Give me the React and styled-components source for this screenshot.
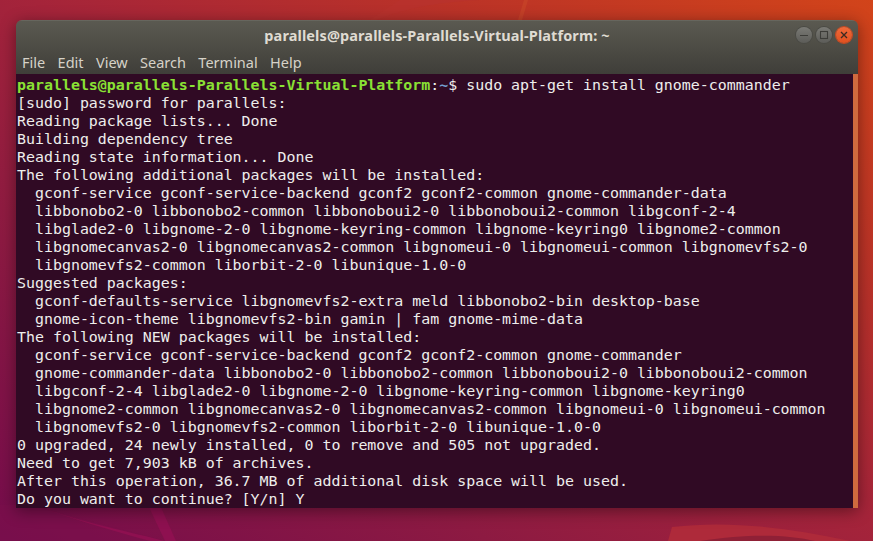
import React from 'react';
import styled, { createGlobalStyle } from 'styled-components';

const GlobalStyle = createGlobalStyle`
    html, body {
        margin: 0;
        padding: 0;
    }
`;

const Desktop = styled.div`
    position: relative;
    width: 873px;
    height: 541px;
    box-sizing: border-box;
    padding: 20px 15px 33px 16px;
    overflow: hidden;
    background: linear-gradient(to top right, #740c4c 0%, #8d1a42 28%, #a5243a 52%, #bb3327 76%, #d2441a 100%);
`;

const Wallpaper = styled.svg`
    position: absolute;
    inset: 0;
`;

const Window = styled.div`
    position: relative;
    display: flex;
    flex-direction: column;
    height: 100%;
    border-radius: 6px 6px 0 0;
    overflow: hidden;
    box-shadow: 0 3px 16px rgba(0, 0, 0, 0.42);
`;

const Header = styled.div`
    height: 54px;
    flex: none;
    background: linear-gradient(#5b5a51, #3f3e39);
    box-shadow: inset 0 1px 0 rgba(255, 255, 255, 0.08);
`;

const TitleBar = styled.div`
    position: relative;
    height: 30px;
    display: flex;
    align-items: center;
    justify-content: center;
`;

const Title = styled.div`
    font: 700 14.5px "Noto Sans", sans-serif;
    letter-spacing: 0.1px;
    color: #dfdbd2;
`;

const Controls = styled.div`
    position: absolute;
    top: 7px;
    right: 6px;
    display: flex;
    gap: 4px;
`;

const Control = styled.div`
    width: 16px;
    height: 16px;
    display: flex;
    align-items: center;
    justify-content: center;
    border-radius: 50%;
    background: ${props =>
        props.$close
            ? 'linear-gradient(#f0693a, #e0501f)'
            : 'linear-gradient(#7a7a75, #5c5c58)'};
    box-shadow: 0 0 0 1px ${props => (props.$close ? '#c9481f' : '#4a4a45')};
`;

const MenuBar = styled.div`
    height: 24px;
    display: flex;
    align-items: center;
    gap: 12.4px;
    padding-left: 6px;
`;

const MenuItem = styled.span`
    font: 14.5px "Noto Sans", sans-serif;
    color: #d6d2c8;
`;

const TerminalArea = styled.div`
    flex: 1;
    display: flex;
    min-height: 0;
    background: #300a24;
`;

const Output = styled.div`
    flex: 1;
    padding: 2px 0 0 1px;
    font-family: "DejaVu Sans Mono", monospace;
    font-size: 14.93px;
    line-height: 18px;
    color: #eeeeec;
`;

const Line = styled.div`
    height: 18px;
    white-space: pre;
`;

const PromptUser = styled.span`
    font-weight: 700;
    color: #8ae234;
`;

const PromptPath = styled.span`
    font-weight: 700;
    color: #729fcf;
`;

const Scrollbar = styled.div`
    width: 5px;
    flex: none;
    background: #cf6a3e;
`;

const LINES = [
    '[sudo] password for parallels:',
    'Reading package lists... Done',
    'Building dependency tree',
    'Reading state information... Done',
    'The following additional packages will be installed:',
    '  gconf-service gconf-service-backend gconf2 gconf2-common gnome-commander-data',
    '  libbonobo2-0 libbonobo2-common libbonoboui2-0 libbonoboui2-common libgconf-2-4',
    '  libglade2-0 libgnome-2-0 libgnome-keyring-common libgnome-keyring0 libgnome2-common',
    '  libgnomecanvas2-0 libgnomecanvas2-common libgnomeui-0 libgnomeui-common libgnomevfs2-0',
    '  libgnomevfs2-common liborbit-2-0 libunique-1.0-0',
    'Suggested packages:',
    '  gconf-defaults-service libgnomevfs2-extra meld libbonobo2-bin desktop-base',
    '  gnome-icon-theme libgnomevfs2-bin gamin | fam gnome-mime-data',
    'The following NEW packages will be installed:',
    '  gconf-service gconf-service-backend gconf2 gconf2-common gnome-commander',
    '  gnome-commander-data libbonobo2-0 libbonobo2-common libbonoboui2-0 libbonoboui2-common',
    '  libgconf-2-4 libglade2-0 libgnome-2-0 libgnome-keyring-common libgnome-keyring0',
    '  libgnome2-common libgnomecanvas2-0 libgnomecanvas2-common libgnomeui-0 libgnomeui-common',
    '  libgnomevfs2-0 libgnomevfs2-common liborbit-2-0 libunique-1.0-0',
    '0 upgraded, 24 newly installed, 0 to remove and 505 not upgraded.',
    'Need to get 7,903 kB of archives.',
    'After this operation, 36.7 MB of additional disk space will be used.',
    'Do you want to continue? [Y/n] Y',
];

const MENU = ['File', 'Edit', 'View', 'Search', 'Terminal', 'Help'];

export default function App() {
    return (
        <>
            <GlobalStyle />
            <Desktop>
                <Wallpaper width="873" height="541" viewBox="0 0 873 541">
                    <path d="M0 505 L30 505 L165 541 L0 541 Z" fill="#7c0f4c" opacity="0.5" />
                    <path d="M34 505 C80 522 130 532 165 541 L150 541 C110 530 70 518 34 505 Z" fill="#8e1050" />
                    <path d="M148 505 L160 505 L176 541 L165 541 Z" fill="#8e1050" />
                    <path d="M668 541 L672 527 C730 520 790 528 850 541 Z" fill="#ae2a3a" />
                    <path d="M700 541 C750 533 790 535 815 541 Z" fill="#8f2036" />
                    <path d="M376 20 C410 6 445 2 480 0 L400 0 L370 20 Z" fill="#b8322e" opacity="0.7" />
                    <path d="M518 20 L524 0 L528 0 L522 20 Z" fill="#c9482a" opacity="0.6" />
                </Wallpaper>
                <Window>
                    <Header>
                        <TitleBar>
                            <Title>parallels@parallels-Parallels-Virtual-Platform: ~</Title>
                            <Controls>
                                <Control>
                                    <svg width="10" height="10" viewBox="0 0 10 10">
                                        <path d="M1 5.5h8" stroke="#3c3c38" strokeWidth="1.2" />
                                    </svg>
                                </Control>
                                <Control>
                                    <svg width="10" height="10" viewBox="0 0 10 10">
                                        <rect x="1.5" y="1.5" width="7" height="7" fill="none" stroke="#3c3c38" strokeWidth="1.1" />
                                    </svg>
                                </Control>
                                <Control $close>
                                    <svg width="10" height="10" viewBox="0 0 10 10">
                                        <path d="M2 2l6 6M8 2l-6 6" stroke="#3a2a22" strokeWidth="1.3" />
                                    </svg>
                                </Control>
                            </Controls>
                        </TitleBar>
                        <MenuBar>
                            {MENU.map(item => (
                                <MenuItem key={item}>{item}</MenuItem>
                            ))}
                        </MenuBar>
                    </Header>
                    <TerminalArea>
                        <Output>
                            <Line>
                                <PromptUser>parallels@parallels-Parallels-Virtual-Platform</PromptUser>:
                                <PromptPath>~</PromptPath>$ sudo apt-get install gnome-commander
                            </Line>
                            {LINES.map((text, i) => (
                                <Line key={i}>{text}</Line>
                            ))}
                        </Output>
                        <Scrollbar />
                    </TerminalArea>
                </Window>
            </Desktop>
        </>
    );
}
